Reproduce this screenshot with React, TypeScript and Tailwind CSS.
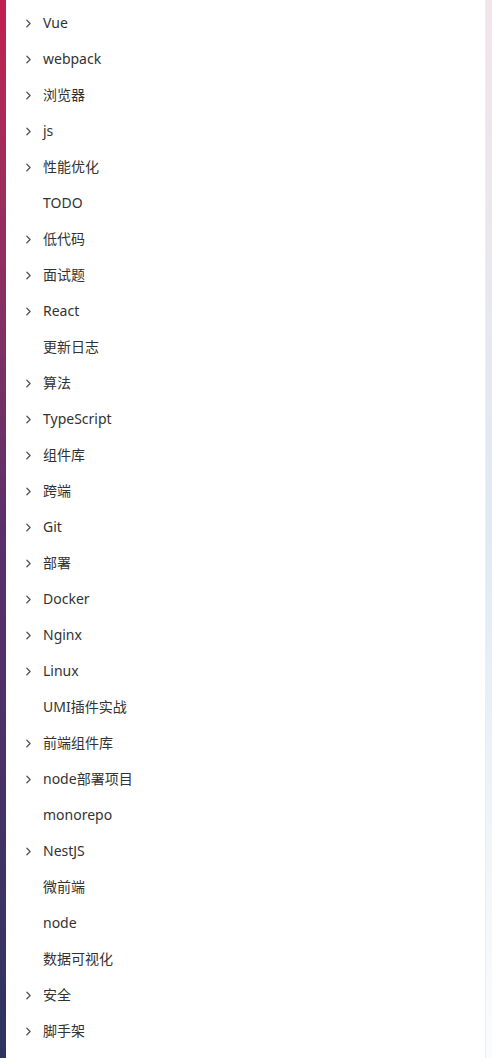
import { ChevronRight } from 'lucide-react'

// Sidebar category list: items with children show a chevron
const items: { label: string; children?: boolean }[] = [
  { label: 'Vue', children: true },
  { label: 'webpack', children: true },
  { label: '浏览器', children: true },
  { label: 'js', children: true },
  { label: '性能优化', children: true },
  { label: 'TODO' },
  { label: '低代码', children: true },
  { label: '面试题', children: true },
  { label: 'React', children: true },
  { label: '更新日志' },
  { label: '算法', children: true },
  { label: 'TypeScript', children: true },
  { label: '组件库', children: true },
  { label: '跨端', children: true },
  { label: 'Git', children: true },
  { label: '部署', children: true },
  { label: 'Docker', children: true },
  { label: 'Nginx', children: true },
  { label: 'Linux', children: true },
  { label: 'UMI插件实战' },
  { label: '前端组件库', children: true },
  { label: 'node部署项目', children: true },
  { label: 'monorepo' },
  { label: 'NestJS', children: true },
  { label: '微前端' },
  { label: 'node' },
  { label: '数据可视化' },
  { label: '安全', children: true },
  { label: '脚手架', children: true },
]

export default function App() {
  return (
    <div
      className="flex h-[1058px] w-[492px] overflow-hidden bg-white"
      style={{ fontFamily: '"Noto Sans", "Noto Sans CJK SC", sans-serif' }}
    >
      {/* left accent bar */}
      <div className="w-[6px] shrink-0 bg-gradient-to-b from-[#c21f4f] via-[#5b2e6b] to-[#2d3461]" />

      {/* menu */}
      <div className="flex-1 pt-[5px]">
        {items.map(({ label, children }) => (
          <div key={label} className="flex h-[36px] items-center">
            <div className="flex w-[37px] shrink-0 justify-end pr-[8px]">
              {children && <ChevronRight className="h-[13px] w-[13px] text-[#555]" strokeWidth={2.4} />}
            </div>
            <span className="text-[14px] leading-none text-[#333]">{label}</span>
          </div>
        ))}
      </div>

      {/* right edge */}
      <div className="w-[7px] shrink-0 border-l border-[#eeeeee] bg-gradient-to-b from-[#f3e4ea] via-[#dfeaf4] to-[#fbfcfd]" />
    </div>
  )
}
